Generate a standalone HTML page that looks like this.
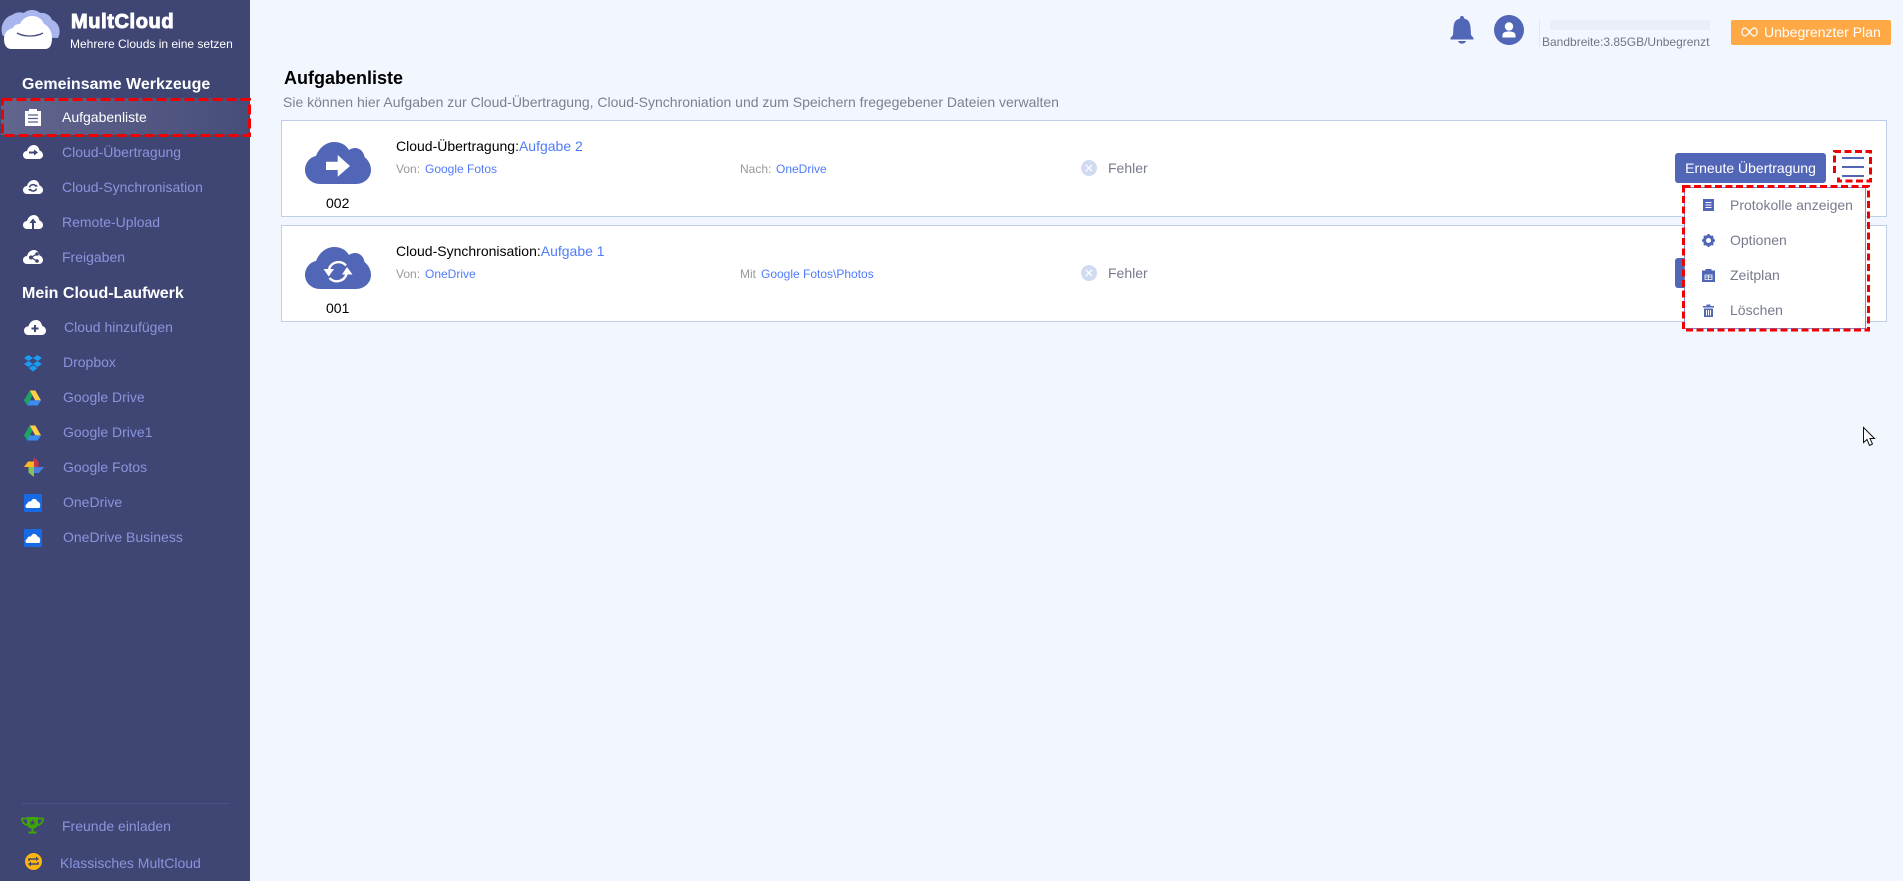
<!DOCTYPE html>
<html lang="de"><head><meta charset="utf-8"><title>MultCloud</title>
<style>
html,body{margin:0;padding:0}
body{width:1903px;height:881px;overflow:hidden;position:relative;background:#f2f6fe;font-family:"Liberation Sans",Arial,sans-serif;font-size:14px}
.a{position:absolute}
.t{position:absolute;white-space:nowrap;line-height:20px;height:20px}
.s{color:#8a94dc}
.h{color:#fff;font-weight:bold;font-size:16px}
.card{position:absolute;left:281px;width:1604px;background:#fff;border:1px solid #c0cde8}
.g{color:#999}
.l{color:#4f7bfb}
.sm{font-size:12px}
.m{color:#777b8c}
svg{position:absolute;overflow:visible}
</style></head><body>
<svg width="0" height="0" style="position:absolute"><defs>
<symbol id="c" viewBox="0 0 66 42" preserveAspectRatio="none"><path d="M15 42C7 42 0 36 0 28C0 21 5 15 11 14C14 6 21 0 29 0C36 0 41 3 44 8C46 6.500 48 6 50 6C55 6 59 10 59.500 15C63.500 18 66 23 66 28C66 36 59 42 51 42Z"/></symbol>
<symbol id="sc" viewBox="0 0 20 14" preserveAspectRatio="none"><path d="M4 14C1.500 14 0 12 0 10C0 7.500 2 6 4 6C5 2 8 0 11 0C14 0 16 2.500 16.500 5.500C18.500 6 20 8 20 10C20 12 18.500 14 16 14Z"/></symbol>
<symbol id="gd" viewBox="0 0 18 16"><polygon points="6,0 12,0 18,10.500 12,10.500" fill="#ffcf48"/><polygon points="6,0 9,5.200 3.500,16 0,10.500" fill="#1da462"/><polygon points="6,10.500 18,10.500 14.500,16 3.500,16" fill="#3a8bf2"/></symbol>
<symbol id="od" viewBox="0 0 18 18"><rect width="18" height="18" rx="1" fill="#1769e4"/><path d="M3 14C1 14 1 10.500 3 10C3.500 7.500 6 7 7 7.500C8 4 12 4 13.500 7.500C16 8 17 11 15.500 14Z" fill="#fff"/></symbol>
</defs></svg>

<!-- Sidebar -->
<div class="a" style="left:0;top:0;width:250px;height:881px;background:#3f4674"></div>

<!-- Logo -->
<svg style="left:0;top:0" width="62" height="52" viewBox="0 0 62 52">
<path d="M3 36C-1 28 4 17 12 15C16 12 20 12 24 13C28 9 36 9 40 13C46 12 51 16 52 20C58 22 62 30 58 38Z" fill="#a9b6ee"/>
<path d="M11 49C6 49 4 44 4 39C4 32 9 29 13 28C14 25 17 24 20 24C22 19 27 16 32 16C38 16 42 19 44 24C49 26 52 32 52 38C52 45 50 49 45 49Z" fill="#fff"/>
<path d="M17 33C24 37 36 37 43 33" fill="none" stroke="#4a5080" stroke-width="1.300"/>
</svg>
<div class="t" style="left:71px;top:12px;color:#fff;font-size:20px;font-weight:bold;letter-spacing:.6px;-webkit-text-stroke:1px #fff">MultCloud</div>
<div class="t" style="left:70px;top:34px;color:#fff;font-size:12px">Mehrere Clouds in eine setzen</div>

<div class="t h" style="left:22px;top:75px">Gemeinsame Werkzeuge</div>

<!-- Active item -->
<div class="a" style="left:1px;top:98px;width:249px;height:37px;box-sizing:border-box;background:linear-gradient(90deg,#62668e,#474d7a);"></div>
<svg style="left:0;top:97px" width="252" height="40"><rect x="2.500" y="2.500" width="247" height="36" fill="none" stroke="#f00000" stroke-width="3" stroke-dasharray="10 4"/></svg>
<svg style="left:25px;top:109px" width="16" height="17" viewBox="0 0 16 17"><path d="M0 2H4V0H12V2H16V17H0Z" fill="#fff"/><path d="M3 6H13M3 9.500H13M3 13H13" stroke="#5a5f88" stroke-width="1.200"/></svg>
<div class="t" style="left:62px;top:107px;color:#fff">Aufgabenliste</div>

<!-- Tools -->
<svg style="left:23px;top:145px;fill:#fff" width="20" height="14"><use href="#sc" width="20" height="14"/><path d="M6 7.500H11.500" stroke="#3f4674" stroke-width="2"/><path d="M11 4.500L15 7.500L11 10.500Z" fill="#3f4674"/></svg>
<div class="t s" style="left:62px;top:142px">Cloud-Übertragung</div>
<svg style="left:23px;top:180px;fill:#fff" width="20" height="14"><use href="#sc" width="20" height="14"/><path d="M6.500 7.500A3.500 3.500 0 0 1 13 6.500M13.500 8.500A3.500 3.500 0 0 1 7 9" stroke="#3f4674" stroke-width="1.500" fill="none"/><path d="M11.500 6.500H15L13.500 4.500ZM5 9H8.500L6.500 11Z" fill="#3f4674"/></svg>
<div class="t s" style="left:62px;top:177px">Cloud-Synchronisation</div>
<svg style="left:23px;top:215px;fill:#fff" width="20" height="14"><use href="#sc" width="20" height="14"/><path d="M10 14V7" stroke="#3f4674" stroke-width="2"/><path d="M6.500 8L10 3.500L13.500 8Z" fill="#3f4674"/></svg>
<div class="t s" style="left:62px;top:212px">Remote-Upload</div>
<svg style="left:23px;top:250px;fill:#fff" width="20" height="14"><use href="#sc" width="20" height="14"/><path d="M14 4L8 7.500L14 11" stroke="#3f4674" stroke-width="1.300" fill="none"/><circle cx="8" cy="7.500" r="2" fill="#3f4674"/><circle cx="14" cy="4" r="1.800" fill="#3f4674"/><circle cx="14" cy="11" r="1.800" fill="#3f4674"/></svg>
<div class="t s" style="left:62px;top:247px">Freigaben</div>

<div class="t h" style="left:22px;top:284px">Mein Cloud-Laufwerk</div>

<svg style="left:24px;top:320px;fill:#fff" width="22" height="15"><use href="#sc" width="22" height="15"/><path d="M11 5V12M7.500 8.500H14.500" stroke="#3f4674" stroke-width="2"/></svg>
<div class="t s" style="left:64px;top:317px">Cloud hinzufügen</div>

<svg style="left:24px;top:355px" width="18" height="17" viewBox="0 0 18 17" fill="#1a9bf5"><path d="M4.500 0L9 3L4.500 6L0 3ZM13.500 0L18 3L13.500 6L9 3ZM4.500 6L9 9L4.500 12L0 9ZM13.500 6L18 9L13.500 12L9 9ZM4.500 13L9 10.200L13.500 13L9 16.500Z"/></svg>
<div class="t s" style="left:63px;top:352px">Dropbox</div>

<svg style="left:24px;top:390px" width="17" height="16"><use href="#gd" width="17" height="16"/></svg>
<div class="t s" style="left:63px;top:387px">Google Drive</div>
<svg style="left:24px;top:425px" width="17" height="16"><use href="#gd" width="17" height="16"/></svg>
<div class="t s" style="left:63px;top:422px">Google Drive1</div>

<svg style="left:24px;top:457px" width="20" height="20" viewBox="0 0 20 20">
<path d="M9.500 10V0L14.500 4.500V10Z" fill="#c8344e"/><path d="M9.500 10H20L15 16H9.500Z" fill="#4a7de0"/><path d="M10 10V20L4.500 15.500V10Z" fill="#86c25a"/><path d="M10 10H0L4 4.500H10Z" fill="#fcb81e"/></svg>
<div class="t s" style="left:63px;top:457px">Google Fotos</div>

<svg style="left:24px;top:494px" width="18" height="18"><use href="#od" width="18" height="18"/></svg>
<div class="t s" style="left:63px;top:492px">OneDrive</div>
<svg style="left:24px;top:529px" width="18" height="18"><use href="#od" width="18" height="18"/></svg>
<div class="t s" style="left:63px;top:527px">OneDrive Business</div>

<div class="a" style="left:22px;top:803px;width:206px;height:1px;background:#4c5389"></div>
<svg style="left:22px;top:817px" width="21" height="18" viewBox="0 0 21 18"><path d="M5 0H16V7C16 10 13 11.500 11.500 11.500V14.500H14.500V16.500H6.500V14.500H9.500V11.500C8 11.500 5 10 5 7Z" fill="#3fa40a"/><path d="M5 1.500H0C0 5 2 7.500 5.500 8M16 1.500H21C21 5 19 7.500 15.500 8" fill="none" stroke="#3fa40a" stroke-width="1.800"/><path d="M10.500 2.500L11.400 4.700L13.500 4.800L12 6.200L12.500 8.200L10.500 7L8.500 8.200L9 6.200L7.500 4.800L9.600 4.700Z" fill="#3f4674"/></svg>
<div class="t s" style="left:62px;top:816px">Freunde einladen</div>
<svg style="left:25px;top:853px" width="17" height="17" viewBox="0 0 17 17"><circle cx="8.500" cy="8.500" r="8.500" fill="#fdb40c"/><path d="M4 8V6H12M13 9V11H5" fill="none" stroke="#3f4674" stroke-width="1.500"/><path d="M11 3.500L14 6L11 8ZM6 8.500L3 11L6 13.500Z" fill="#3f4674"/></svg>
<div class="t s" style="left:60px;top:853px">Klassisches MultCloud</div>

<!-- Top bar -->
<svg style="left:1450px;top:16px" width="24" height="29" viewBox="0 0 24 29" fill="#5266b8"><path d="M12 0C13.500 0 14 1 14 2.500C19 3.500 20 7 20.500 11L21 19L23.500 22V23.500H.5V22L3 19L3.500 11C4 7 5 3.500 10 2.500C10 1 10.500 0 12 0Z"/><path d="M8 25H16C15 28.500 9 28.500 8 25Z"/></svg>
<svg style="left:1494px;top:15px" width="30" height="30" viewBox="0 0 30 30"><circle cx="15" cy="15" r="15" fill="#5266b8"/><circle cx="15" cy="11.500" r="4.200" fill="#fff"/><path d="M8.500 22.500V20.500C8.500 17.500 11 16.500 15 16.500C19 16.500 21.500 17.500 21.500 20.500V22.500Z" fill="#fff"/></svg>
<div class="a" style="left:1539px;top:20px;width:1px;height:27px;background:#e3e7f0"></div>
<div class="a" style="left:1550px;top:20px;width:160px;height:10px;background:#eaeef7"></div>
<div class="t sm" style="left:1542px;top:32px;color:#6f7585">Bandbreite:3.85GB/Unbegrenzt</div>
<div class="a" style="left:1731px;top:20px;width:160px;height:25px;background:#ffa946;border-radius:2px"></div>
<svg style="left:1741px;top:27px" width="17" height="10" viewBox="0 0 17 10"><path d="M8.500 5C6.500 2 5 1 3.500 1C2 1 1 3 1 5C1 7 2 9 3.500 9C5 9 6.500 8 8.500 5C10.500 2 12 1 13.500 1C15 1 16 3 16 5C16 7 15 9 13.500 9C12 9 10.500 8 8.500 5Z" fill="none" stroke="#fff" stroke-width="1.200"/></svg>
<div class="t" style="left:1764px;top:22px;color:#fff">Unbegrenzter Plan</div>

<!-- Heading -->
<div class="t" style="left:284px;top:68px;font-size:18px;font-weight:bold;color:#000">Aufgabenliste</div>
<div class="t" style="left:283px;top:92px;color:#7b818f">Sie können hier Aufgaben zur Cloud-Übertragung, Cloud-Synchroniation und zum Speichern fregegebener Dateien verwalten</div>

<!-- Card 1 -->
<div class="card" style="top:120px;height:95px"></div>
<svg style="left:305px;top:142px;fill:#5266b8" width="66" height="42" viewBox="0 0 66 42"><use href="#c" width="66" height="42"/><path d="M21 19.700H32.700V13L45 24L32.700 34.700V28H21Z" fill="#fff"/></svg>
<div class="t" style="left:326px;top:193px;color:#000">002</div>
<div class="t" style="left:396px;top:136px;color:#000">Cloud-Übertragung:<span class="l">Aufgabe 2</span></div>
<div class="t sm g" style="left:396px;top:159px">Von:</div>
<div class="t sm l" style="left:425px;top:159px">Google Fotos</div>
<div class="t sm g" style="left:740px;top:159px">Nach:</div>
<div class="t sm l" style="left:776px;top:159px">OneDrive</div>
<svg style="left:1081px;top:160px" width="16" height="16" viewBox="0 0 16 16"><circle cx="8" cy="8" r="8" fill="#d0daf0"/><path d="M4.800 4.800L11.200 11.200M11.200 4.800L4.800 11.200" stroke="#fff" stroke-width="1.200"/></svg>
<div class="t m" style="left:1108px;top:158px">Fehler</div>
<div class="a" style="left:1675px;top:153px;width:151px;height:30px;background:#5266b8;border-radius:3px;color:#fff;text-align:center;line-height:30px">Erneute Übertragung</div>

<!-- Card 2 -->
<div class="card" style="top:225px;height:95px"></div>
<svg style="left:305px;top:247px;fill:#5266b8" width="66" height="42" viewBox="0 0 66 42"><use href="#c" width="66" height="42"/><path d="M24 22A10 10 0 0 1 41 18.500M41.500 27A10 10 0 0 1 24.500 31" fill="none" stroke="#fff" stroke-width="2.400"/><path d="M18.500 22H29L23.700 29.500ZM37 27.500H47.500L42 20Z" fill="#fff"/></svg>
<div class="t" style="left:326px;top:298px;color:#000">001</div>
<div class="t" style="left:396px;top:241px;color:#000">Cloud-Synchronisation:<span class="l">Aufgabe 1</span></div>
<div class="t sm g" style="left:396px;top:264px">Von:</div>
<div class="t sm l" style="left:425px;top:264px">OneDrive</div>
<div class="t sm g" style="left:740px;top:264px">Mit</div>
<div class="t sm l" style="left:761px;top:264px">Google Fotos\Photos</div>
<svg style="left:1081px;top:265px" width="16" height="16" viewBox="0 0 16 16"><circle cx="8" cy="8" r="8" fill="#d0daf0"/><path d="M4.800 4.800L11.200 11.200M11.200 4.800L4.800 11.200" stroke="#fff" stroke-width="1.200"/></svg>
<div class="t m" style="left:1108px;top:263px">Fehler</div>
<div class="a" style="left:1675px;top:258px;width:151px;height:30px;background:#5266b8;border-radius:3px"></div>

<!-- Hamburger -->
<svg style="left:1833px;top:150px" width="40" height="34"><path d="M9 8H31M9 17H31M9 26H31" stroke="#5266b8" stroke-width="2"/><path d="M1.500 23V1.500H37.500V31H5.500V25" fill="none" stroke="#f00000" stroke-width="3" stroke-dasharray="7 3.500"/></svg>

<!-- Menu -->
<div class="a" style="left:1684px;top:187px;width:182px;height:142px;box-sizing:border-box;background:#fff;border:1px solid #7d8ad2"></div>
<svg style="left:1682px;top:185px" width="188" height="146"><rect x="1.500" y="1.500" width="185" height="143.500" fill="none" stroke="#f00000" stroke-width="3" stroke-dasharray="7 3.500"/></svg>
<svg style="left:1703px;top:199px" width="11" height="12" viewBox="0 0 11 12"><rect width="11" height="12" fill="#5266b8"/><path d="M2.500 3.500H8.500M2.500 6H8.500M2.500 8.500H8.500" stroke="#fff" stroke-width="1.100"/></svg>
<div class="t m" style="left:1730px;top:195px">Protokolle anzeigen</div>
<svg style="left:1702px;top:234px" width="13" height="13" viewBox="0 0 13 13"><circle cx="6.500" cy="6.500" r="4" fill="none" stroke="#5266b8" stroke-width="3"/><path d="M6.500 0V13M0 6.500H13M2 2L11 11M11 2L2 11" stroke="#5266b8" stroke-width="2.200" stroke-dasharray="2.400 8.200 2.400 8.200"/></svg>
<div class="t m" style="left:1730px;top:230px">Optionen</div>
<svg style="left:1702px;top:269px" width="13" height="13" viewBox="0 0 13 13"><path d="M0 1.500H3.500V0H9.500V1.500H13V13H0Z" fill="#5266b8"/><path d="M3 6H10V10.500H3ZM6.500 6V10.500M3 8H10" fill="none" stroke="#fff" stroke-width=".8"/></svg>
<div class="t m" style="left:1730px;top:265px">Zeitplan</div>
<svg style="left:1703px;top:304px" width="11" height="13" viewBox="0 0 11 13"><path d="M0 2H3.500V.5H7.500V2H11V3.500H0ZM1 4.500H10V13H1Z" fill="#5266b8"/><path d="M3.500 6V11.500M5.500 6V11.500M7.500 6V11.500" stroke="#fff" stroke-width="1"/></svg>
<div class="t m" style="left:1730px;top:300px">Löschen</div>

<!-- Cursor -->
<svg style="left:1863px;top:427px" width="13" height="20" viewBox="0 0 13 20"><path d="M.5.500V15.500L4 12.500L6.500 18.500L9.500 17L7 11.500H11.500Z" fill="#fff" stroke="#111" stroke-width="1"/></svg>
</body></html>
